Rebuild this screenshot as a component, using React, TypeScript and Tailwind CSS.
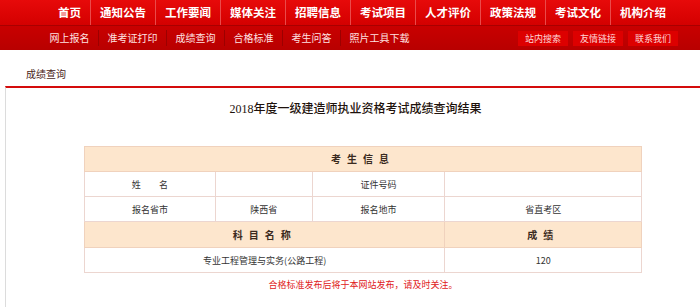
const mainNav = ['首页', '通知公告', '工作要闻', '媒体关注', '招聘信息', '考试项目', '人才评价', '政策法规', '考试文化', '机构介绍'];
const subNav = ['网上报名', '准考证打印', '成绩查询', '合格标准', '考生问答', '照片工具下载'];
const quickLinks = ['站内搜索', '友情链接', '联系我们'];

const cjk = "font-['Noto_Sans_CJK_SC','Noto_Sans',sans-serif]";

export default function App() {
  return (
    <div className={`w-[700px] h-[307px] overflow-hidden bg-white ${cjk}`}>
      {/* main navigation */}
      <div className="h-[25px] flex items-center pl-[49px] bg-gradient-to-b from-[#e70a0a] to-[#d40000]">
        {mainNav.map((item, i) => (
          <div
            key={item}
            className={`h-full flex items-center px-[9px] text-[11.5px] font-bold text-white leading-none ${
              i < mainNav.length - 1 ? 'border-r border-[#ea4a4a]' : ''
            }`}
          >
            {item}
          </div>
        ))}
      </div>

      {/* sub navigation */}
      <div className="h-[25px] flex items-center bg-gradient-to-b from-[#c90000] to-[#b80000] border-t border-[#a80000]">
        <div className="flex items-center h-full pl-[41px]">
          {subNav.map((item, i) => (
            <div
              key={item}
              className={`h-[16px] flex items-center px-[8.5px] text-[10px] text-[#ffe2e2] leading-none ${
                i < subNav.length - 1 ? 'border-r border-[#9c0000]' : ''
              }`}
            >
              {item}
            </div>
          ))}
        </div>
        <div className="ml-auto mr-[22px] flex items-center gap-[5px]">
          {quickLinks.map((item) => (
            <div
              key={item}
              className="w-[50px] h-[15px] flex items-center justify-center bg-[#dd0000] text-[9px] text-[#ffd6d6] leading-none"
            >
              {item}
            </div>
          ))}
        </div>
      </div>

      {/* breadcrumb */}
      <div className="h-[36px] flex items-center pl-[26px] pt-[10px] text-[10px] text-[#4a2418]">成绩查询</div>

      {/* content box */}
      <div className="ml-[5px] w-[715px] border-t-2 border-[#d40c0c] border-l border-l-[#dcdcdc] h-[260px]">
        <div className="h-[40px] flex items-center justify-center pr-[15px] pt-[1px] text-[12px] font-medium text-[#1e120c] font-['Liberation_Serif','Noto_Sans_CJK_SC',serif]">
          2018年度一级建造师执业资格考试成绩查询结果
        </div>

        <div className="ml-[78px] mt-[18px] w-[558px]">
          <table className="w-full border-collapse border border-[#f0d2bd] text-[9px] text-[#333] leading-none">
            <colgroup>
              <col className="w-[131px]" />
              <col className="w-[97px]" />
              <col className="w-[133px]" />
              <col className="w-[197px]" />
            </colgroup>
            <tbody>
              <tr className="h-[25px] bg-[#fde6cd]">
                <td colSpan={4} className="text-center font-bold text-[10px] text-[#3a2a20] tracking-[6px] border border-[#f0d2bd]">
                  考生信息
                </td>
              </tr>
              <tr className="h-[25px]">
                <td className="text-center border border-[#ecd6d0]">
                  姓<span className="inline-block w-[18px]" />名
                </td>
                <td className="border border-[#ecd6d0]" />
                <td className="text-center border border-[#ecd6d0]">证件号码</td>
                <td className="border border-[#ecd6d0]" />
              </tr>
              <tr className="h-[25px]">
                <td className="text-center border border-[#ecd6d0]">报名省市</td>
                <td className="text-center border border-[#ecd6d0]">陕西省</td>
                <td className="text-center border border-[#ecd6d0]">报名地市</td>
                <td className="text-center border border-[#ecd6d0]">省直考区</td>
              </tr>
              <tr className="h-[26px] bg-[#fde6cd]">
                <td colSpan={3} className="text-center font-bold text-[10px] text-[#3a2a20] tracking-[6px] border border-[#f0d2bd]">
                  科目名称
                </td>
                <td className="text-center font-bold text-[10px] text-[#3a2a20] tracking-[6px] border border-[#f0d2bd]">
                  成绩
                </td>
              </tr>
              <tr className="h-[25px]">
                <td colSpan={3} className="text-center border border-[#ecd6d0]">
                  专业工程管理与实务(公路工程)
                </td>
                <td className="text-center border border-[#ecd6d0]">120</td>
              </tr>
            </tbody>
          </table>
          <p className="mt-[7px] text-center text-[9px] text-[#e02020] leading-none">
            合格标准发布后将于本网站发布，请及时关注。
          </p>
        </div>
      </div>
    </div>
  );
}
